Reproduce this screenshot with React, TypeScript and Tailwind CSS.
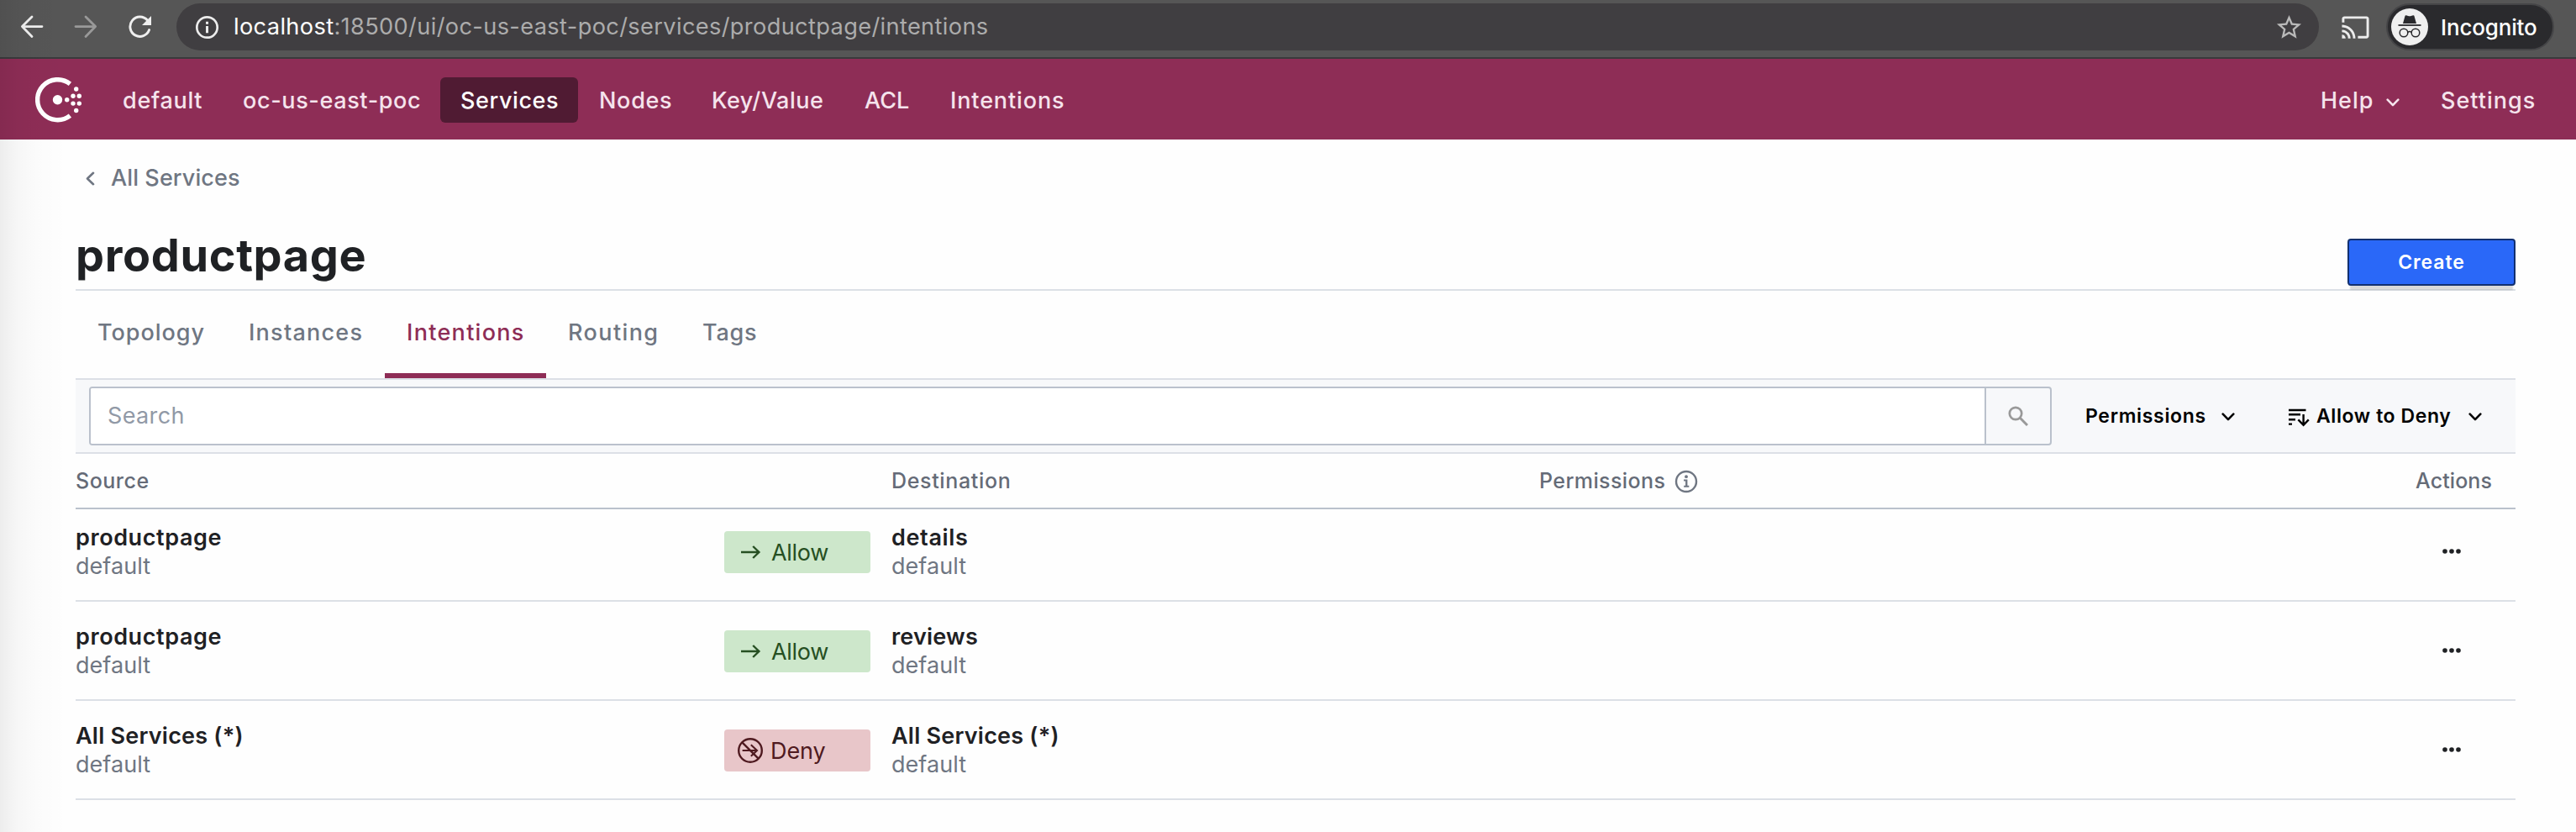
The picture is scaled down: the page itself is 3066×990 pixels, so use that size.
import type { ReactNode } from 'react';
import { MdCast, MdStarBorder } from 'react-icons/md';

type NavItem = { label: string; className: string };
type Intention = { source: string; destination: string; action: 'allow' | 'deny'; destTracking: string; sourceTracking: string };

const NAV: NavItem[] = [
  { label: 'default', className: 'w-[143px] pl-6 tracking-[0.7px]' },
  { label: 'oc-us-east-poc', className: 'w-[259px] pl-6 tracking-[0.63px]' },
  { label: 'Services', className: 'w-[164px] pl-6 tracking-[0.58px] rounded-md bg-[#501b33] text-white' },
  { label: 'Nodes', className: 'w-[135px] pl-[25px] tracking-[0.7px]' },
  { label: 'Key/Value', className: 'w-[182px] pl-6 tracking-[0.5px]' },
  { label: 'ACL', className: 'w-[101px] pl-6' },
  { label: 'Intentions', className: 'pl-[25px] tracking-[0.87px]' },
];

const TABS: (NavItem & { active?: boolean })[] = [
  { label: 'Topology', className: 'w-[180px] tracking-[0.98px]' },
  { label: 'Instances', className: 'w-[188px] tracking-[1.25px]' },
  { label: 'Intentions', className: 'w-[192px] tracking-[1.3px]', active: true },
  { label: 'Routing', className: 'w-[160px] tracking-[1.4px]' },
  { label: 'Tags', className: 'tracking-[0.76px]' },
];

const INTENTIONS: Intention[] = [
  { source: 'productpage', destination: 'details', action: 'allow', sourceTracking: 'tracking-[0.59px]', destTracking: 'tracking-[0.65px]' },
  { source: 'productpage', destination: 'reviews', action: 'allow', sourceTracking: 'tracking-[0.59px]', destTracking: 'tracking-[0.21px]' },
  { source: 'All Services (*)', destination: 'All Services (*)', action: 'deny', sourceTracking: 'tracking-[0.22px]', destTracking: 'tracking-[0.22px]' },
];

function ChevronDown({ className }: { className: string }) {
  return (
    <svg className={className} width="16" height="10" viewBox="0 0 16 10" fill="none" stroke="currentColor" strokeWidth="2.6" strokeLinecap="round" strokeLinejoin="round">
      <path d="M1.7 1.7 8 8.1 14.3 1.7" />
    </svg>
  );
}

function BrowserBar() {
  return (
    <div className="flex h-[70px] items-start border-b-2 border-[#3a3a3c] bg-[#565656] pt-1">
      <div className="flex h-14 w-[210px] shrink-0 items-center pl-6 text-[#efefef]">
        <svg width="28" height="28" viewBox="0 0 28 28" fill="none" stroke="currentColor" strokeWidth="2.8" strokeLinecap="round" strokeLinejoin="round">
          <path d="M26 13.6H2.6M14 2 2.4 13.6 14 25.4" />
        </svg>
        <svg className="ml-9 text-[#999999]" width="28" height="28" viewBox="0 0 28 28" fill="none" stroke="currentColor" strokeWidth="2.8" strokeLinecap="round" strokeLinejoin="round">
          <path d="M2 13.6h23.4M14 2l11.6 11.6L14 25.4" />
        </svg>
        <svg className="ml-9" width="30" height="28" viewBox="0 0 30 28">
          <path d="M25.6 17.6A11.7 11.7 0 1 1 23.4 6" fill="none" stroke="currentColor" strokeWidth="2.9" strokeLinecap="round" />
          <path d="M28 1v11H17z" fill="currentColor" />
        </svg>
      </div>
      <div className="flex h-14 w-[2550px] shrink-0 items-center rounded-full bg-[#403e41] pl-[22px] pr-[18px]">
        <svg width="29" height="29" viewBox="0 0 29 29">
          <circle cx="14.5" cy="14.5" r="12.2" fill="none" stroke="#ececec" strokeWidth="2.7" />
          <path d="M13 7.8h3v2.9h-3zM13 13h3v8.2h-3z" fill="#ececec" />
        </svg>
        <div className="ml-[17px] flex-1 whitespace-nowrap pt-px text-[27.2px] tracking-[0.36px] text-[#acacac]">
          <span className="text-white">localhost</span>:18500/ui/oc-us-east-poc/services/productpage/intentions
        </div>
        <MdStarBorder className="text-[#b9b9b9]" size={35} />
      </div>
      <div className="flex h-14 items-center pl-[26px]">
        <MdCast className="text-[#ececec]" size={35} />
      </div>
      <div className="ml-[19px] flex h-14 w-[200px] items-center rounded-full border-2 border-[#454547] bg-[#2a2a2d] pl-1">
        <svg width="44" height="44" viewBox="0 0 44 44">
          <circle cx="22" cy="22" r="22" fill="#efefef" />
          <path d="M14 18l2.6-9.2c.2-.6.7-.8 1.3-.6l2.4.8c1 .3 2.4.3 3.4 0l2.4-.8c.6-.2 1.1 0 1.3.6L30 18z" fill="#2a2a2d" />
          <path d="M8.5 20h27" stroke="#2a2a2d" strokeWidth="1.8" />
          <g fill="none" stroke="#2a2a2d" strokeWidth="1.5">
            <circle cx="15" cy="29" r="4.8" />
            <circle cx="29" cy="29" r="4.8" />
            <path d="M19.8 28.5c1.2-1 3.2-1 4.4 0" />
          </g>
        </svg>
        <span className="ml-[15px] pt-px text-[26px] font-medium tracking-[-0.17px] text-white">Incognito</span>
      </div>
    </div>
  );
}

function ConsulLogo() {
  return (
    <svg className="shrink-0" width="56" height="54" viewBox="0 0 56 54" fill="#ffffff">
      <path d="M41.4 7.8A24 24 0 1 0 41.4 45.6" fill="none" stroke="#ffffff" strokeWidth="5.4" />
      <circle cx="26.5" cy="26.7" r="5.7" />
      <circle cx="37.7" cy="26.7" r="2.7" />
      <circle cx="45" cy="22.3" r="2.7" />
      <circle cx="52.3" cy="22.3" r="2.7" />
      <circle cx="45" cy="31.1" r="2.7" />
      <circle cx="52.3" cy="31.1" r="2.7" />
      <circle cx="48.7" cy="14" r="2.7" />
      <circle cx="48.7" cy="39.5" r="2.7" />
    </svg>
  );
}

function NavBar() {
  return (
    <nav className="flex h-24 items-center bg-[#8e2d56] pl-[42px] pt-[2px] text-[27px] font-medium text-[#f5e3ec]">
      <ConsulLogo />
      <div className="ml-6 flex">
        {NAV.map((item) => (
          <div key={item.label} className={`flex h-[54px] items-center whitespace-nowrap pt-[2px] ${item.className}`}>
            {item.label}
          </div>
        ))}
      </div>
      <div className="ml-auto flex h-[54px] w-[304px] shrink-0 items-center pt-[2px]">
        <span className="w-[78px] tracking-[1px]">Help</span>
        <ChevronDown className="mt-1" />
        <span className="ml-[49px] tracking-[1px]">Settings</span>
      </div>
    </nav>
  );
}

function Badge({ action }: { action: 'allow' | 'deny' }) {
  const allow = action === 'allow';
  return (
    <div
      className={`mt-[9px] flex h-[50px] w-[174px] items-center rounded-[4px] pl-[14px] text-[27px] ${
        allow ? 'bg-[#cde7cb] text-[#264f22]' : 'bg-[#e8c6c9] text-[#4f1a20]'
      }`}
    >
      <svg width="34" height="34" viewBox="0 0 34 34" fill="none" stroke="currentColor" strokeWidth="2.4">
        {allow ? (
          <path d="M6 17h21M20.2 10l7.2 7-7.2 7" />
        ) : (
          <>
            <circle cx="17" cy="17" r="13.8" />
            <path d="M7.3 7.3l19.4 19.4" />
            <path d="M7.6 17h17.6M17.8 10.2l7.2 6.8-7.2 6.8" strokeWidth="2.1" />
          </>
        )}
      </svg>
      <span className={allow ? 'ml-2 pt-[2px] tracking-[-0.3px]' : 'ml-[7px] pt-[2px] tracking-[-0.1px]'}>{allow ? 'Allow' : 'Deny'}</span>
    </div>
  );
}

function ServiceName({ name, tracking }: { name: string; tracking: string }) {
  return (
    <div className="text-[27px] leading-[34px]">
      <div className={`font-semibold text-[#1f2124] ${tracking}`}>{name}</div>
      <div className="text-[#6f7682] tracking-[0.05px]">default</div>
    </div>
  );
}

function Row({ children }: { children: ReactNode }) {
  return <div className="grid h-[118px] grid-cols-[772px_199px_771px_1fr] items-start border-b-2 border-[#dce0e6] pt-[25px] first:h-[110px] first:pt-[17px]">{children}</div>;
}

export default function App() {
  return (
    <div className="relative h-[990px] w-[3066px] overflow-hidden bg-[#fefefe] font-['Inter',sans-serif]">
      <BrowserBar />
      <NavBar />
      <main className="pl-[90px] pr-[72px] pt-7">
        <div className="flex h-9 items-center pl-3 text-[27px] font-medium text-[#6f7682]">
          <svg width="11" height="17" viewBox="0 0 11 17" fill="none" stroke="currentColor" strokeWidth="2.6" strokeLinecap="round" strokeLinejoin="round">
            <path d="M9 1.8 2 8.5 9 15.2" />
          </svg>
          <span className="ml-[19px] tracking-[0.1px]">All Services</span>
        </div>
        <header className="flex h-[116px] justify-between border-b-2 border-[#dce0e6]">
          <h1 className="pt-[42px] text-[54px] font-bold leading-[64px] tracking-[0.65px] text-[#1f2124]">productpage</h1>
          <button className="relative mt-[54px] h-14 w-[200px] rounded-[4px] border-2 border-[#123070] bg-[#2a68f8] text-[23px] font-semibold tracking-[0.9px] text-white shadow-[0_8px_2px_-3px_rgba(0,0,0,0.14)]">
            Create
          </button>
        </header>
        <div className="flex h-[104px] text-[27px] font-medium text-[#6f7682]">
          {TABS.map((tab) => (
            <div
              key={tab.label}
              className={`flex items-center border-b-[6px] pl-[26px] pt-[2px] ${tab.active ? 'border-[#8e2d56] text-[#8e2d56]' : 'border-transparent'} ${tab.className}`}
            >
              {tab.label}
            </div>
          ))}
        </div>
        <div className="flex h-[90px] items-center border-y-2 border-[#dce0e6] bg-[#f7f8fa] pl-4 text-[23px] font-semibold text-black">
          <div className="flex h-[70px] w-[2336px] shrink-0 overflow-hidden rounded-[4px] border-2 border-[#bac1cc]">
            <div className="flex w-[2256px] items-center border-r-2 border-[#bac1cc] bg-white pl-5 pt-px text-[27px] font-normal tracking-[0.37px] text-[#9199a6]">
              Search
            </div>
            <div className="flex flex-1 items-center justify-center">
              <svg width="24" height="24" viewBox="0 0 24 24" fill="none" stroke="#999999" strokeWidth="2.7">
                <circle cx="9" cy="9" r="7.2" />
                <path d="M14 14l9 9" strokeWidth="3" />
              </svg>
            </div>
          </div>
          <span className="ml-10 w-[162px] tracking-[0.68px]">Permissions</span>
          <ChevronDown className="mt-0.5" />
          <svg className="ml-16 mt-1" width="25" height="22" viewBox="0 0 25 22" fill="none" stroke="currentColor" strokeWidth="2.4">
            <path d="M0 2h20.5M0 7.3h14M0 13.2h8M0 18.6h4M17.6 7v12.5M11.4 13.4l6.2 6.4 6.2-6.4" />
          </svg>
          <span className="ml-2 w-[181px] whitespace-nowrap tracking-[0.6px]">Allow to Deny</span>
          <ChevronDown className="mt-0.5" />
        </div>
        <div className="grid h-[66px] grid-cols-[971px_771px_1fr_119px] items-center border-b-2 border-[#bac1cc] pt-px text-[25px] font-medium text-[#656b77]">
          <span className="tracking-[0.52px]">Source</span>
          <span className="tracking-[0.65px]">Destination</span>
          <div className="flex items-center">
            <span className="w-[161px] tracking-[0.41px]">Permissions</span>
            <svg width="28" height="28" viewBox="0 0 28 28" fill="#6f7682">
              <circle cx="14" cy="14" r="12" fill="none" stroke="#6f7682" strokeWidth="2.4" />
              <circle cx="14" cy="8.2" r="1.9" />
              <path d="M11 11.6h4.4v7.2h1.9v2H11.2v-2h1.9v-5.2H11z" />
            </svg>
          </div>
          <span className="tracking-[0.1px]">Actions</span>
        </div>
        <div>
          {INTENTIONS.map((row, i) => (
            <Row key={i}>
              <ServiceName name={row.source} tracking={row.sourceTracking} />
              <Badge action={row.action} />
              <ServiceName name={row.destination} tracking={row.destTracking} />
              <svg className="ml-auto mr-[64px] mt-[29px]" width="24" height="8" viewBox="0 0 24 8" fill="#1f2124">
                <circle cx="4" cy="4" r="2.8" />
                <circle cx="12" cy="4" r="2.8" />
                <circle cx="20" cy="4" r="2.8" />
              </svg>
            </Row>
          ))}
        </div>
      </main>
      <div className="pointer-events-none absolute inset-y-0 left-0 w-20 bg-[linear-gradient(to_right,rgba(0,0,0,0.065),rgba(0,0,0,0.03)_25%,rgba(0,0,0,0.01)_55%,transparent)]" />
    </div>
  );
}
